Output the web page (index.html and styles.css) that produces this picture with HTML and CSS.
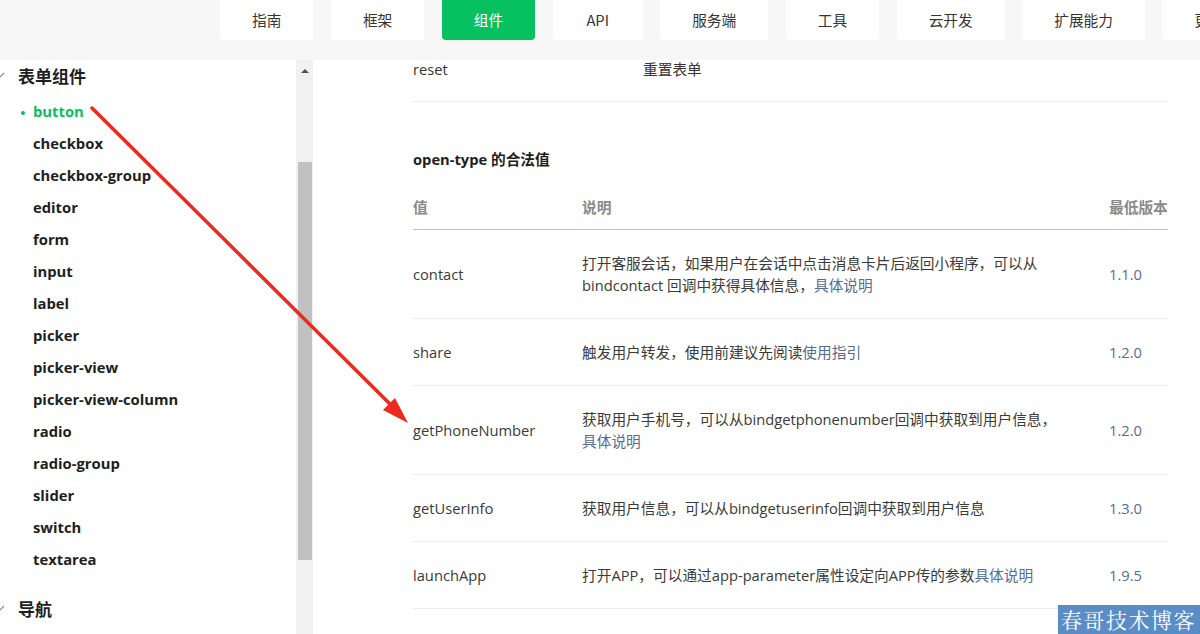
FILE: index.html
```html
<!DOCTYPE html>
<html lang="zh-CN">
<head>
<meta charset="utf-8">
<title>button | 微信开放文档</title>
<link rel="stylesheet" href="styles.css">
</head>
<body>
<div class="page">
  <header class="topbar">
    <nav class="tabs">
      <a class="tab">指南</a>
      <a class="tab">框架</a>
      <a class="tab active">组件</a>
      <a class="tab tab-api">API</a>
      <a class="tab">服务端</a>
      <a class="tab">工具</a>
      <a class="tab">云开发</a>
      <a class="tab">扩展能力</a>
      <a class="tab">更多</a>
    </nav>
  </header>
  <div class="body">
    <aside class="sidebar">
      <div class="side-inner">
        <div class="group-title">
          <svg class="chev" width="10" height="8" viewBox="0 0 10 8"><path d="M1 2 L5 6 L9 2" fill="none" stroke="#888" stroke-width="1.2"/></svg>
          <span>表单组件</span>
        </div>
        <ul class="items">
          <li class="active">button</li>
          <li>checkbox</li>
          <li>checkbox-group</li>
          <li>editor</li>
          <li>form</li>
          <li>input</li>
          <li>label</li>
          <li>picker</li>
          <li>picker-view</li>
          <li>picker-view-column</li>
          <li>radio</li>
          <li>radio-group</li>
          <li>slider</li>
          <li>switch</li>
          <li>textarea</li>
        </ul>
        <div class="group-title group-next">
          <svg class="chev" width="10" height="8" viewBox="0 0 10 8"><path d="M1 2 L5 6 L9 2" fill="none" stroke="#888" stroke-width="1.2"/></svg>
          <span>导航</span>
        </div>
      </div>
      <div class="scrollbar">
        <div class="sb-up"></div>
        <div class="sb-thumb"></div>
      </div>
    </aside>
    <main class="content">
      <div class="prev-row">
        <span class="prev-key">reset</span>
        <span>重置表单</span>
      </div>
      <h3 class="section-title">open-type 的合法值</h3>
      <table class="tbl">
        <colgroup><col class="c1"><col class="c2"><col class="c3"></colgroup>
        <thead>
          <tr><th>值</th><th>说明</th><th>最低版本</th></tr>
        </thead>
        <tbody>
          <tr><td>contact</td><td>打开客服会话，如果用户在会话中点击消息卡片后返回小程序，可以从 bindcontact 回调中获得具体信息，<a class="link">具体说明</a></td><td><a class="link">1.1.0</a></td></tr>
          <tr><td>share</td><td>触发用户转发，使用前建议先阅读<a class="link">使用指引</a></td><td><a class="link">1.2.0</a></td></tr>
          <tr><td>getPhoneNumber</td><td>获取用户手机号，可以从bindgetphonenumber回调中获取到用户信息，<a class="link">具体说明</a></td><td><a class="link">1.2.0</a></td></tr>
          <tr><td>getUserInfo</td><td>获取用户信息，可以从bindgetuserinfo回调中获取到用户信息</td><td><a class="link">1.3.0</a></td></tr>
          <tr><td>launchApp</td><td>打开APP，可以通过app-parameter属性设定向APP传的参数<a class="link">具体说明</a></td><td><a class="link">1.9.5</a></td></tr>
        </tbody>
      </table>
    </main>
  </div>
  <svg class="annot" width="1200" height="634" viewBox="0 0 1200 634">
    <line x1="92" y1="108" x2="394" y2="408" stroke="#ec2a1f" stroke-width="3.5" stroke-linecap="round"/>
    <polygon points="408,423 383,410 395,398" fill="#ec2a1f"/>
  </svg>
  <div class="watermark">春哥技术博客</div>
</div>
</body>
</html>
```

FILE: styles.css
```css
* { box-sizing: border-box; }
html, body { margin: 0; padding: 0; }
body {
  font-family: "Open Sans", "Noto Sans CJK SC", sans-serif;
  color: #353535;
  background: #fff;
}
.page {
  position: relative;
  width: 1200px;
  height: 634px;
  overflow: hidden;
}
.topbar {
  height: 60px;
  background: #f7f7f7;
  overflow: hidden;
}
.tabs {
  display: flex;
  gap: 17.5px;
  padding-left: 220px;
  flex-wrap: nowrap;
}
.tab {
  flex-shrink: 0;
  height: 40px;
  line-height: 40px;
  padding: 0 32px;
  text-align: center;
  background: #fff;
  border-radius: 0 0 4px 4px;
  font-size: 14.7px;
  color: #353535;
  font-family: "Noto Sans CJK SC", sans-serif;
}
.tab-api { min-width: 90px; }
.tab.active {
  background: #07c160;
  color: #fff;
}
.body {
  display: flex;
  height: 574px;
}
.sidebar {
  display: flex;
  width: 313px;
  flex-shrink: 0;
}
.side-inner {
  width: 296px;
  padding-top: 3px;
  background: #fff;
}
.group-title {
  display: flex;
  align-items: center;
  height: 24px;
  font-family: "Noto Sans CJK SC", sans-serif;
  font-size: 17px;
  font-weight: 700;
  color: #1e1e1e;
}
.chev {
  margin-left: -5px;
  margin-right: 13px;
}
.group-next { margin-top: 21px; }
.items {
  list-style: none;
  margin: 8px 0 0;
  padding: 0;
}
.items li {
  height: 32px;
  line-height: 32px;
  padding-left: 33px;
  font-size: 14.8px;
  font-weight: 700;
  color: #1e1e1e;
}
.items li.active { color: #07c160; }
.items li.active::before {
  content: "";
  display: inline-block;
  width: 4px;
  height: 4px;
  border-radius: 50%;
  background: #07c160;
  margin-left: -12px;
  margin-right: 8px;
  vertical-align: middle;
}
.scrollbar {
  width: 17px;
  background: #f1f1f1;
  padding-top: 9px;
}
.sb-up {
  width: 0;
  height: 0;
  margin: 0 auto;
  border-left: 4px solid transparent;
  border-right: 4px solid transparent;
  border-bottom: 4px solid #505050;
}
.sb-thumb {
  width: 14px;
  height: 398px;
  margin: 89px auto 0;
  background: #c1c1c1;
}
.content {
  flex: 1;
  padding-left: 100px;
  background: #fff;
  font-size: 14.7px;
}
.prev-row {
  width: 755px;
  display: flex;
  line-height: 18px;
  padding-bottom: 23px;
  border-bottom: 1px solid #ececec;
}
.prev-key { width: 230px; }
.section-title {
  margin: 46px 0 0;
  line-height: 22px;
  font-size: 14.7px;
  font-weight: 700;
  color: #1e1e1e;
}
.tbl {
  margin-top: 15px;
  width: 755px;
  table-layout: fixed;
  border-collapse: collapse;
}
.c1 { width: 169px; }
.c2 { width: 527px; }
.c3 { width: 59px; }
.tbl th {
  text-align: left;
  font-weight: 700;
  color: #8a8a8a;
  line-height: 22px;
  padding: 11px 20px 11px 0;
  border-bottom: 1px solid #c4c4c4;
  font-family: "Noto Sans CJK SC", sans-serif;
  white-space: nowrap;
}
.tbl td {
  line-height: 22px;
  padding: 22px 20px 22px 0;
  border-bottom: 1px solid #ececec;
  vertical-align: middle;
  color: #3a3a3a;
}
.tbl th:last-child, .tbl td:last-child { padding-right: 0; }
.link { color: #576b95; text-decoration: none; white-space: nowrap; }
.annot {
  position: absolute;
  left: 0;
  top: 0;
  pointer-events: none;
}
.watermark {
  position: absolute;
  right: 0;
  bottom: 0;
  width: 142px;
  height: 29px;
  background: #5a8dc6;
  color: #fff;
  font-family: "Noto Serif CJK SC", "AR PL UKai CN", "Noto Sans CJK SC", serif;
  font-size: 21px;
  line-height: 29px;
  letter-spacing: 1.5px;
  padding-left: 3px;
  white-space: nowrap;
}
```
